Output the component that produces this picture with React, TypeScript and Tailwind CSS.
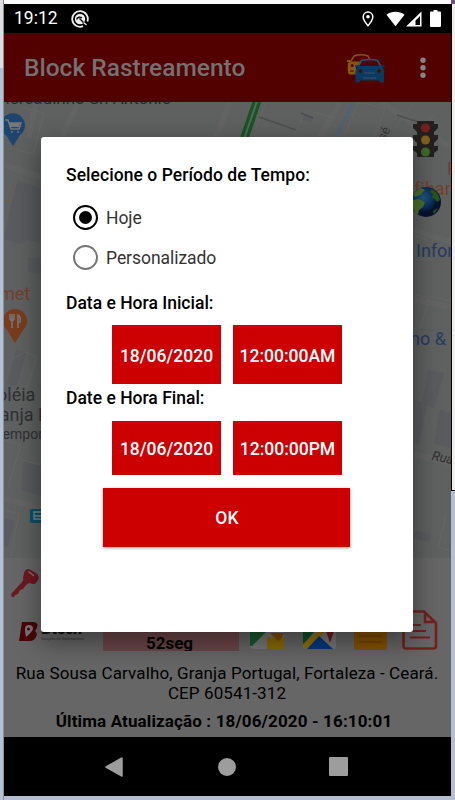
import { useState } from 'react';

const periods = ['Hoje', 'Personalizado'];

function StatusBar() {
  return (
    <div className="flex h-[29px] items-center bg-black pl-2.5 pr-[10px] text-white">
      <span className="pt-px text-[17.500px] leading-none">19:12</span>
      <svg className="ml-[13px] h-[18px] w-[18px]" viewBox="0 0 18 18" fill="none">
        <path d="M12 16.200A7.800 7.800 0 1 1 16.400 11.500" stroke="#eee" strokeWidth="1.800" />
        <circle cx="9" cy="9" r="5.200" fill="#eee" />
        <path d="M5.500 9.500c1-2.500 3.500-3 5.500-1.500M8.500 8.500l4.500 4.500" stroke="#000" strokeWidth="1.400" />
        <path d="M12.500 12.500l3 2.500" stroke="#eee" strokeWidth="1.300" />
      </svg>
      <svg className="ml-auto h-[16px] w-[12px]" viewBox="0 0 12 16" fill="none">
        <path
          d="M6 1a4.800 4.800 0 0 0-4.800 4.800C1.200 9.300 6 14.700 6 14.700s4.800-5.400 4.800-8.900A4.800 4.800 0 0 0 6 1z"
          stroke="#fff"
          strokeWidth="1.500"
        />
        <circle cx="6" cy="5.800" r="1.800" fill="#fff" />
      </svg>
      <svg className="ml-[12px] h-[16px] w-[19px]" viewBox="0 0 20 16">
        <path d="M0.500 3.500C6-0.500 14-0.500 19.500 3.500L10 15.500z" fill="#fff" />
      </svg>
      <svg className="ml-px h-[16px] w-[16px]" viewBox="0 0 16 16">
        <path fillRule="evenodd" d="M15.500 0.500v15H0zM14 5L9.500 9.500V14H14z" fill="#fff" />
      </svg>
      <svg className="ml-[8px] h-[17px] w-[11px]" viewBox="0 0 11 17">
        <path d="M3.500 0h4v1.500H10q1 0 1 1V16q0 1-1 1H1q-1 0-1-1V2.500q0-1 1-1h2.500z" fill="#fff" />
      </svg>
    </div>
  );
}

function CarsIcon() {
  return (
    <svg className="h-[30px] w-[39px]" viewBox="0 0 39 30" fill="none">
      <path d="M4 7l3-5q7-2.500 14 0l2 4" stroke="#82560f" strokeWidth="1.500" />
      <path d="M0 6h3l1 1.500h9V10l-4 2v8.500H2Q0 18 1 9L3 8H0z" fill="#87570f" />
      <circle cx="5.200" cy="11.500" r="1.500" fill="#520000" />
      <path d="M3 17h4" stroke="#520000" />
      <path d="M11.500 12l3-5.500q8.500-2 16 0l3 5.500" stroke="#225579" strokeWidth="1.700" />
      <path
        d="M8 11.500h4l2 .5h17l2-.5h4.500V13H35q3 3 2 7v8q-4 1.500-5-1.500H13.500Q12.500 29.500 8.500 28v-8q-.5-4 2.500-7H8z"
        fill="#073c61"
      />
      <circle cx="13.500" cy="17" r="1.700" fill="#520000" />
      <circle cx="32" cy="17" r="1.700" fill="#520000" />
      <path d="M17 19h11M16 24h13" stroke="#48486a" strokeWidth="1.200" />
    </svg>
  );
}

function AppBar() {
  return (
    <div className="flex h-[69px] items-center bg-[#520000] pl-5 pr-[25px] text-[#727272]">
      <span className="pt-[2px] text-[24.500px] font-medium">Block Rastreamento</span>
      <div className="ml-auto pt-[2px]">
        <CarsIcon />
      </div>
      <svg className="ml-[34px] h-[22px] w-[6px]" viewBox="0 0 6 22" fill="#858585">
        <circle cx="3" cy="3.200" r="2.700" />
        <circle cx="3" cy="10.700" r="2.700" />
        <circle cx="3" cy="18.200" r="2.700" />
      </svg>
    </div>
  );
}

function MapDrawing() {
  return (
    <svg className="h-[456px] w-[447px]" viewBox="4 102 447 456" fill="none">
      <rect x="4" y="102" width="447" height="456" fill="#5f6060" />
      {/* blocks */}
      <g fill="#595b5e">
        <path d="M16 180l24 8v55l-12-3-9 4-15-5z" />
        <path d="M28 258h13v17l-13-3zM16 350l10 2-9 34-10-2zM24 462l17 4v30l-20-6z" />
        <path d="M4 518l10 3-6 26-4-1zM428 370l16 3-10 35-12-4zM414 400l13 4-8 40-5-1zM440 410l11 3v35l-17-4zM414 530l17 5-2 7-15-4z" />
        <path d="M302 113l11 4-2 5-10-3z" />
      </g>
      {/* streets */}
      <g stroke="#636363" strokeWidth="6">
        <path d="M4 165l37 12M4 498l37 11M36 102l-7 35M62 137l16-35M230 102l-14 35M320 137l20-35" />
        <path d="M414 455l37 8M414 300l37 7M380 102l71 45M414 230l37 12" />
      </g>
      <g stroke="#696969" strokeWidth="0.700">
        <path d="M22 107l22 6-11 41-22-6M11 360l14-8 12 5-12 37-14-5M4 440l17 5-13 42M22 460l19 5M4 510l15 4-8 42" />
        <path d="M255 130l11-28M293 137l13-27 29 8M345 134l14-32 26 7-11 28M395 128l20-26M416 135l20-22" />
        <path d="M416 295l13 3-10 35M430 296l21 5M414 452l37 9M446 515l-8 32 13 4M414 345l22-8M414 235l37 15M414 255l20 5" />
      </g>
      <path d="M259 117l37 13M301 113l12 5M397 115l24 8" stroke="#4f4f50" strokeWidth="1.500" />
      <path d="M17 180l-6 22-7-2" stroke="#6a6052" strokeWidth="1.500" />
      <path d="M242 137l12-35M247.500 137l12-35" stroke="#155623" strokeWidth="3.200" />
      <path d="M336 137l17-35" stroke="#48647d" strokeWidth="2" />
      {/* supermarket */}
      <path d="M13 146l-7-11a12 12 0 1 1 14 0z" fill="#1d456f" />
      <path d="M5 120h3l3 9h8l2-6H9" stroke="#777" strokeWidth="1.500" />
      <path d="M9 123h11l-1 4h-9z" fill="#777" />
      <circle cx="12" cy="132" r="1" fill="#777" />
      <circle cx="18" cy="132" r="1" fill="#777" />
      {/* restaurant */}
      <path d="M15 343l-8-13a12 12 0 1 1 16 0z" fill="#783c1c" />
      <path d="M10 314v5q2 3 4 0v-5M12 314v14M18 328v-13q3 2 2 7h-2" stroke="#777" strokeWidth="1.500" />
      {/* bus stop */}
      <rect x="30" y="509" width="15" height="14" rx="2" fill="#08516c" />
      <path d="M34 512h8v7h-8zM34 516h8" stroke="#788" strokeWidth="1.300" />
    </svg>
  );
}

function TrafficLight() {
  return (
    <svg className="absolute left-[408px] top-[18px] h-[38px] w-[28px]" viewBox="0 0 28 38">
      <path d="M1 4h4V1h17v3h4v4l-4 4v3h4v4l-4 4v3h4v4l-4 3v4H5v-4l-4-3v-4h4v-3l-4-4v-4h4v-3L1 8z" fill="#242020" />
      <circle cx="13.500" cy="8" r="4.500" fill="#74211e" />
      <circle cx="13.500" cy="20" r="4.500" fill="#80601e" />
      <circle cx="13.500" cy="32" r="4.500" fill="#3d6a29" />
    </svg>
  );
}

function Globe() {
  return (
    <svg className="absolute left-[406px] top-[83px] h-[34px] w-[32px]" viewBox="0 0 32 34">
      <defs>
        <radialGradient id="sea" cx="40%" cy="35%">
          <stop offset="0" stopColor="#235a83" />
          <stop offset="0.650" stopColor="#0c315e" />
          <stop offset="1" stopColor="#06142e" />
        </radialGradient>
      </defs>
      <circle cx="16" cy="17" r="15" fill="url(#sea)" />
      <path d="M3 10q3-5 8-7l4 2-5 5-5 2zM2 15l7-1 6 3-2 5-4 3-1 5Q1 25 2 15z" fill="#4b6f2c" />
      <path d="M21 4q8 3 9 11l-3 2-2-3-3-1 1-4-3-2zM23 26l5-3-4 6z" fill="#28551a" />
    </svg>
  );
}

function TrackingMap() {
  return (
    <div className="relative h-[456px] overflow-hidden whitespace-nowrap">
      <MapDrawing />
      <span className="absolute -left-[9px] -top-[14px] text-[17px] leading-[20px] text-[#2d2541]">
        Mercadinho Sh Antônio
      </span>
      <span className="absolute -left-[5px] top-[181px] text-[18px] leading-[22px] text-[#74402b]">met</span>
      <span className="absolute -left-[7px] top-[282px] text-[18px] leading-[22px] text-[#303033]">oléia Mus</span>
      <span className="absolute -left-[10px] top-[302px] text-[18px] leading-[22px] text-[#303033]">ranja Por</span>
      <span className="absolute -left-[6px] top-[323px] text-[14px] leading-[18px] text-[#303033]">tempora</span>
      <span className="absolute left-[373px] top-[25px] -rotate-65 text-[13px] leading-none text-[#383838]">sé</span>
      <TrafficLight />
      <span className="absolute left-[443px] top-[56px] text-[18px] leading-[22px] text-[#74402b]">R</span>
      <span className="absolute left-[401px] top-[76px] text-[18px] leading-[22px] text-[#74402b] [font-variant-ligatures:none]">
        sfihar
      </span>
      <Globe />
      <span className="absolute left-[412px] top-[138px] text-[18px] leading-[22px] text-[#263c61]">Inform</span>
      <span className="absolute left-[406px] top-[226px] text-[18px] leading-[22px] text-[#263c61]">no &amp; T</span>
      <span className="absolute left-[428px] top-[349px] rotate-12 text-[13px] italic leading-none text-[#303030]">
        Rua
      </span>
    </div>
  );
}

function KeyIcon() {
  return (
    <svg className="h-[28px] w-[29px]" viewBox="0 0 29 28" fill="none">
      <path
        d="M13 4q1-4 5-4l7 4q4 3 2 7l-2 3q-3 2-6 0-2 0-4 2l-3 4-3 1-2 4-3 1-1 2H1q-2-3 1-5l9-10q2-2 1-4z"
        fill="#6c1820"
      />
      <path d="M18 3l4.500 3.500" stroke="#777" strokeWidth="1.500" strokeLinecap="round" />
    </svg>
  );
}

function BtechLogo() {
  return (
    <div className="flex h-[22px] w-[66px]">
      <svg className="h-[19px] w-[20px] shrink-0" viewBox="0 0 20 19">
        <path d="M3 0h12q5 1 3 6l-2 3q3 2 1 6-2 4-6 4H0z" fill="#4c0508" />
        <path d="M10 3a4 4 0 0 0-4 4q0 3 1 8 6-5 7-8a4 4 0 0 0-4-4z" fill="#777" />
        <circle cx="9.500" cy="7" r="1.500" fill="#4c0508" />
      </svg>
      <div className="ml-[2px] flex flex-col whitespace-nowrap">
        <span className="-mt-px text-[16px] font-black leading-[16px] tracking-[-0.200px] text-[#111]">Btech</span>
        <span className="text-[3.500px] leading-[4px] text-[#333]">Soluções em Rastreamento</span>
      </div>
    </div>
  );
}

function VehiclePanel() {
  return (
    <div className="h-[179px] bg-[#666] text-black">
      <div className="flex h-[51px] pl-[7px] pt-[11px]">
        <KeyIcon />
      </div>
      <div className="flex h-[42px] items-end pl-[15px]">
        <div className="mb-[7px]">
          <BtechLogo />
        </div>
        <div className="ml-[18px] flex h-[42px] w-[136px] items-end justify-center overflow-hidden bg-[#6b4648] pr-[3px]">
          <span className="text-[17px] font-bold leading-[15px]">52seg</span>
        </div>
        <svg className="mb-[2px] ml-[11px] h-[33px] w-[34px]" viewBox="0 0 34 33">
          <rect width="34" height="33" rx="3" fill="#777" />
          <path d="M0 2h30L2 30H0z" fill="#17592c" />
          <path d="M17 21v12h14q3 0 3-3v-9z" fill="#8a6a05" />
          <path d="M20 17h14q-3 7-6 8z" fill="#86480c" />
        </svg>
        <svg className="mb-[2px] ml-[19px] h-[33px] w-[33px]" viewBox="0 0 33 33">
          <rect width="33" height="33" rx="3" fill="#777" />
          <path d="M0 0h25L0 29z" fill="#0d4f29" />
          <path d="M0 28L17 13l5 3L4 33q-4 0-4-5z" fill="#937009" />
          <path d="M16 20l14 13H4z" fill="#07377d" />
          <path d="M23 15h8l-4 12z" fill="#711b1b" />
        </svg>
        <svg className="mb-px ml-[18px] h-[34px] w-[33px]" viewBox="0 0 33 34">
          <rect width="33" height="34" rx="3" fill="#865100" />
          <path d="M5 20h23M5 26h23" stroke="#6f4504" strokeWidth="1.500" />
        </svg>
        <svg className="mb-px ml-[15px] h-[40px] w-[36px]" viewBox="0 0 36 40" fill="none" stroke="#74201f" strokeWidth="2.600">
          <path d="M3 1.500h19L34 13v23q0 2.500-2.500 2.500H4q-2.500 0-2.500-2.500V3q0-1.500 1.500-1.500zM23 2v10h10" />
          <path d="M8 15h11M8 21h16M8 27.500h20" strokeWidth="2.200" />
        </svg>
      </div>
      <div className="pr-px pt-[12px] text-center text-[17px] leading-[20px] tracking-[0.110px]">
        <p className="whitespace-nowrap">Rua Sousa Carvalho, Granja Portugal, Fortaleza - Ceará.</p>
        <p>CEP 60541-312</p>
      </div>
      <p className="mt-[8px] pr-[7px] text-center text-[17px] font-bold leading-5 tracking-[0.130px]">
        Última Atualização : 18/06/2020 - 16:10:01
      </p>
    </div>
  );
}

function NavigationBar() {
  return (
    <div className="flex h-[59px] items-center bg-black pl-[101px]">
      <svg className="h-[20px] w-[18px]" viewBox="0 0 18 20">
        <path d="M17 1v18L1 10z" fill="#9d9d9d" stroke="#9d9d9d" strokeWidth="1.500" strokeLinejoin="round" />
      </svg>
      <div className="ml-[95px] h-[18px] w-[18px] rounded-full bg-[#9d9d9d]" />
      <div className="ml-[93px] h-[19px] w-[19px] rounded-[1px] bg-[#9d9d9d]" />
    </div>
  );
}

function DateButton({ children }: { children: string }) {
  return (
    <button className="w-[109px] bg-[#cc0000] pt-[3px] text-[17.500px] font-medium text-white">{children}</button>
  );
}

function PeriodDialog() {
  const [period, setPeriod] = useState('Hoje');

  return (
    <div className="absolute left-[37px] top-[133px] flex h-[495px] w-[372px] flex-col rounded-[3px] bg-white px-[25px] pt-[28px] text-black shadow-[0_9px_26px_2px_rgba(0,0,0,0.4)]">
      <p className="text-[17.500px] font-medium leading-5 tracking-[0.050px]">Selecione o Período de Tempo:</p>
      <div className="mt-[12px] flex flex-col pl-[7px]">
        {periods.map((name) => (
          <button key={name} onClick={() => setPeriod(name)} className="flex h-10 items-center gap-2">
            <span
              className={
                period === name
                  ? 'flex h-[25px] w-[25px] items-center justify-center rounded-full border-[2.500px] border-black'
                  : 'h-[25px] w-[25px] rounded-full border-[2.500px] border-[#757575]'
              }
            >
              {period === name ? <span className="h-[13px] w-[13px] rounded-full bg-black" /> : null}
            </span>
            <span className="pt-[2px] text-[17.500px] leading-5 tracking-[-0.050px] text-[#333]">{name}</span>
          </button>
        ))}
      </div>
      <p className="mt-[16px] text-[17.500px] font-medium leading-5">Data e Hora Inicial:</p>
      <div className="mt-[12px] flex h-[59px] gap-3 pl-[46px]">
        <DateButton>18/06/2020</DateButton>
        <DateButton>12:00:00AM</DateButton>
      </div>
      <p className="mt-[4px] text-[17.500px] font-medium leading-5">Date e Hora Final:</p>
      <div className="mt-[13px] flex h-[54px] gap-3 pl-[46px]">
        <DateButton>18/06/2020</DateButton>
        <DateButton>12:00:00PM</DateButton>
      </div>
      <button className="ml-[37.400px] mt-[13px] h-[59px] w-[247px] bg-[#cc0000] pt-px text-[17.500px] font-medium text-white shadow-[0_1px_3px_rgba(0,0,0,0.4)]">
        OK
      </button>
    </div>
  );
}

export default function App() {
  return (
    <div className="flex h-[800px] w-[455px] overflow-hidden bg-[#b5bfd0] font-['Roboto',sans-serif]">
      <div className="w-1 shrink-0 border-r border-[#8b919b] bg-[#b4c0d4]">
        <div className="h-[68px] bg-[#dedede]" />
      </div>
      <div className="flex w-[447px] shrink-0 flex-col">
        <div className="h-1 bg-[#fafafa]" />
        <div className="relative h-[792px]">
          <StatusBar />
          <AppBar />
          <TrackingMap />
          <VehiclePanel />
          <NavigationBar />
          <PeriodDialog />
        </div>
      </div>
      <div className="w-1 shrink-0">
        <div className="h-1 bg-[#735084]" />
        <div className="h-[487px] border-b border-l border-black bg-[#f1efee]" />
      </div>
    </div>
  );
}
